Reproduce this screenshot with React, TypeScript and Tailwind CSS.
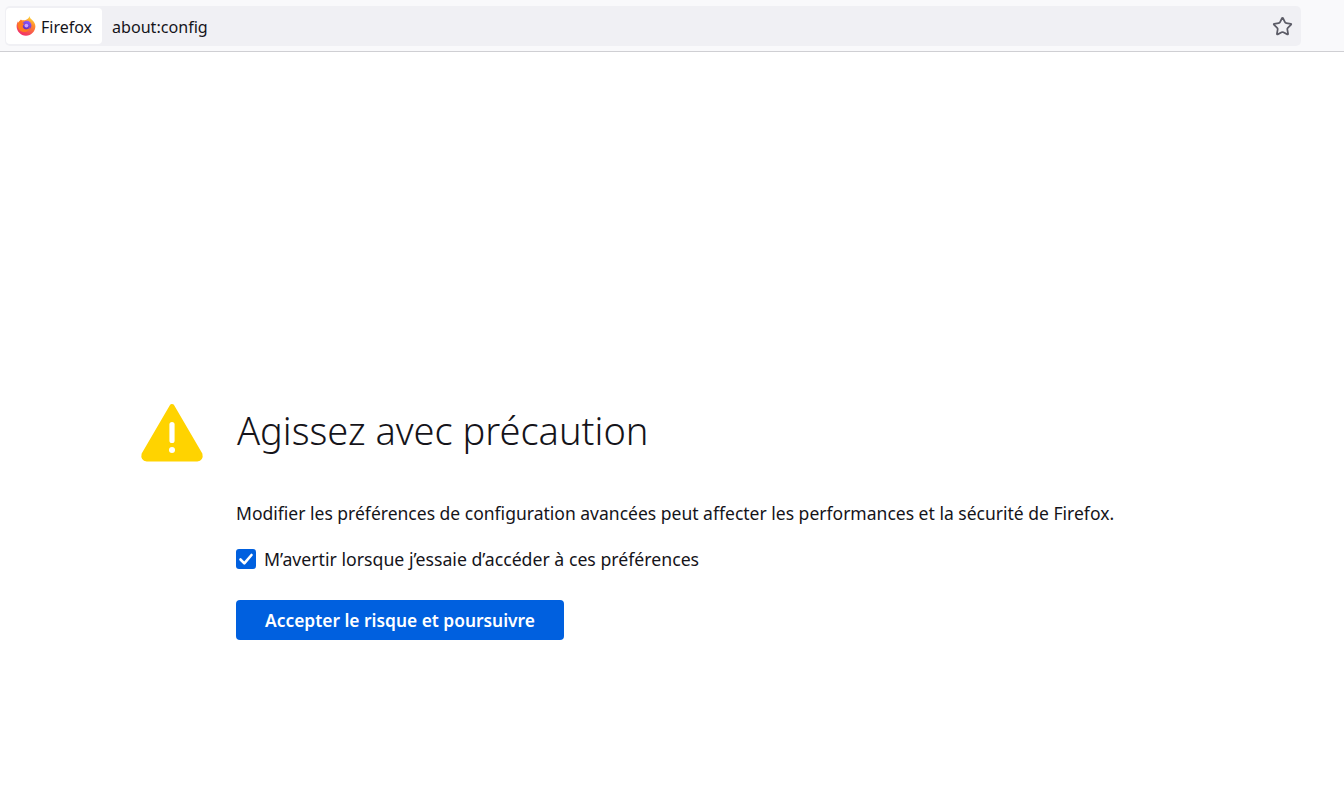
import { Star } from "lucide-react";

const font = "font-['Noto_Sans',sans-serif]";

function FirefoxLogo() {
  return (
    <svg viewBox="0 0 20 20" className="h-[20px] w-[20px]">
      <defs>
        <linearGradient id="ffBody" x1="0.75" y1="0" x2="0.25" y2="1">
          <stop offset="0" stopColor="#ffe03c" />
          <stop offset="0.35" stopColor="#ff8a2e" />
          <stop offset="1" stopColor="#f0266f" />
        </linearGradient>
        <linearGradient id="ffGlobe" x1="0.7" y1="0" x2="0.3" y2="1">
          <stop offset="0" stopColor="#9059ff" />
          <stop offset="1" stopColor="#5b2bb8" />
        </linearGradient>
      </defs>
      <path d="M13.6 0c0 2 1.5 3 2.8 4.3 1.7 1.7 3 3.6 3 6 0 5.1-4.1 9.4-9.4 9.4S0.6 15.4 0.6 10.3c0-1.9 0.5-3.6 1.4-5.1 0.1 0.9 0.4 1.4 0.8 1.8 0.2-1.4 1-2.7 2.2-3.4 0.2 0.5 0.6 0.7 1.1 0.8 1.4-0.1 3.4-0.3 4.5-0.9 1.2-0.6 2.4-1.7 3-3.5z" fill="url(#ffBody)" />
      <circle cx="10.8" cy="9.4" r="4.6" fill="url(#ffGlobe)" />
      <circle cx="10.4" cy="9.6" r="1.9" fill="#c9a0ff" />
      <path d="M2.2 6.8c0.9-1.6 2.7-2.8 4.8-2.6-1.2 0.7-1.5 1.5-1.2 2.2 0.6 1.2 2.5 0.9 3 1.7-1.5 0.4-2.5 1.6-2 3 0.6 1.7 2.4 2.6 4.2 2.2 1.6-0.4 2.7-1.4 3.3-2.8-0.2 3-2.5 5.4-5.5 5.6-3.3 0.2-6-2-6.8-4.9-0.4-1.5-0.3-3 0.2-4.4z" fill="#ff7a1f" />
    </svg>
  );
}

function WarningIcon() {
  return (
    <svg viewBox="0 0 64 60" className="h-[60px] w-[64px]">
      <path
        d="M32 4.5 L60 52.5 Q61 56.5 57 57 L7 57 Q3 56.5 4 52.5 Z"
        fill="#ffd300"
        stroke="#ffd300"
        strokeWidth="5"
        strokeLinejoin="round"
      />
      <rect x="29.4" y="20" width="5.2" height="21" rx="2.6" fill="#fff" />
      <circle cx="32" cy="48" r="3" fill="#fff" />
    </svg>
  );
}

export default function App() {
  return (
    <div className={`min-h-[802px] bg-white ${font}`}>
      <header className="flex h-[52px] items-start border-b border-[#cfcfd3] bg-[#f9f9fb] pl-[5px] pr-[43px] pt-[6px]">
        <div className="flex h-[40px] flex-1 items-center rounded-[5px] bg-[#f0f0f4] pl-[1px] pr-[8px]">
          <div className="flex h-[36px] w-[96px] items-center gap-[5px] rounded-[4px] bg-white pl-[10px] text-[16px] text-[#15141a]">
            <FirefoxLogo />
            <span className="pt-[2px]">Firefox</span>
          </div>
          <span className="ml-[10px] flex-1 pt-[2px] text-[16.1px] text-[#15141a]">about:config</span>
          <Star className="h-[21px] w-[21px] text-[#5b5b66]" strokeWidth={2} />
        </div>
      </header>

      <main className="pl-[140px] pt-[350px]">
        <div className="flex items-start">
          <div className="w-[96px] shrink-0">
            <WarningIcon />
          </div>
          <h1 className="ml-[1px] text-[38px] font-light leading-[56px] text-[#15141a]">Agissez avec précaution</h1>
        </div>
        <div className="mt-[38px] pl-[96px] text-[17.52px] text-[#15141a]">
          <p className="leading-[26px]">
            Modifier les préférences de configuration avancées peut affecter les performances et la sécurité de Firefox.
          </p>
          <label className="mt-[20px] flex h-[26px] items-center gap-[8px]">
            <span className="flex h-[20px] w-[20px] items-center justify-center rounded-[3px] bg-[#0060df]">
              <svg viewBox="0 0 20 20" className="h-[20px] w-[20px]">
                <path d="M4.5 10.5 8.3 14.3 15.5 6" fill="none" stroke="#fff" strokeWidth="2.6" strokeLinecap="round" strokeLinejoin="round" />
              </svg>
            </span>
            <span className="text-[17.7px]">M’avertir lorsque j’essaie d’accéder à ces préférences</span>
          </label>
          <button
            type="button"
            className="mt-[28px] flex h-[40px] w-[328px] items-center justify-center rounded-[4px] bg-[#0060df] pt-[1px] text-[17.36px] font-semibold text-white"
          >
            Accepter le risque et poursuivre
          </button>
        </div>
      </main>
    </div>
  );
}
